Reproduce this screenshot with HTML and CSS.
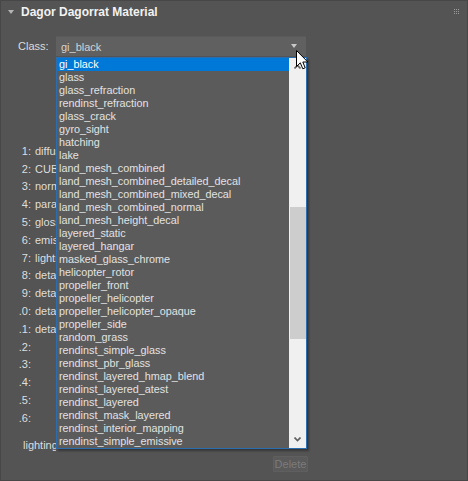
FILE: index.html
```html
<!DOCTYPE html>
<html>
<head>
<meta charset="utf-8">
<link rel="stylesheet" href="styles.css">
</head>
<body>
<div class="panel">
  <div class="header">
    <span class="tri"></span>
    <span class="title">Dagor Dagorrat Material</span>
    <span class="grip">
      <i></i><i></i><i></i><i></i><i></i><i></i><i></i><i></i><i></i>
    </span>
  </div>

  <div class="class-row">
    <span class="class-label">Class:</span>
    <div class="combo">
      <span class="combo-text">gi_black</span>
      <svg class="combo-arrow" width="6" height="4" viewBox="0 0 6 4"><path d="M0 0H6L3 4Z" fill="#c8c8c8"/></svg>
    </div>
  </div>

  <div class="slots">
    <div class="slot"><span class="num">1:</span><span class="name">diffuse</span></div>
    <div class="slot"><span class="num">2:</span><span class="name">CUBIC</span></div>
    <div class="slot"><span class="num">3:</span><span class="name">normal</span></div>
    <div class="slot"><span class="num">4:</span><span class="name">parallax</span></div>
    <div class="slot"><span class="num">5:</span><span class="name">gloss</span></div>
    <div class="slot"><span class="num">6:</span><span class="name">emissive</span></div>
    <div class="slot"><span class="num">7:</span><span class="name">lightmap</span></div>
    <div class="slot"><span class="num">8:</span><span class="name">detail</span></div>
    <div class="slot"><span class="num">9:</span><span class="name">detail</span></div>
    <div class="slot"><span class="num">.0:</span><span class="name">detail</span></div>
    <div class="slot"><span class="num">.1:</span><span class="name">detail</span></div>
    <div class="slot"><span class="num">.2:</span><span class="name"></span></div>
    <div class="slot"><span class="num">.3:</span><span class="name"></span></div>
    <div class="slot"><span class="num">.4:</span><span class="name"></span></div>
    <div class="slot"><span class="num">.5:</span><span class="name"></span></div>
    <div class="slot"><span class="num">.6:</span><span class="name"></span></div>
  </div>

  <div class="lighting-row"><span class="lighting">lighting</span></div>

  <div class="actions">
    <button class="btn-delete" disabled>Delete</button>
  </div>

  <div class="dropdown">
    <div class="items">
      <div class="item selected">gi_black</div>
      <div class="item">glass</div>
      <div class="item">glass_refraction</div>
      <div class="item">rendinst_refraction</div>
      <div class="item">glass_crack</div>
      <div class="item">gyro_sight</div>
      <div class="item">hatching</div>
      <div class="item">lake</div>
      <div class="item">land_mesh_combined</div>
      <div class="item">land_mesh_combined_detailed_decal</div>
      <div class="item">land_mesh_combined_mixed_decal</div>
      <div class="item">land_mesh_combined_normal</div>
      <div class="item">land_mesh_height_decal</div>
      <div class="item">layered_static</div>
      <div class="item">layered_hangar</div>
      <div class="item">masked_glass_chrome</div>
      <div class="item">helicopter_rotor</div>
      <div class="item">propeller_front</div>
      <div class="item">propeller_helicopter</div>
      <div class="item">propeller_helicopter_opaque</div>
      <div class="item">propeller_side</div>
      <div class="item">random_grass</div>
      <div class="item">rendinst_simple_glass</div>
      <div class="item">rendinst_pbr_glass</div>
      <div class="item">rendinst_layered_hmap_blend</div>
      <div class="item">rendinst_layered_atest</div>
      <div class="item">rendinst_layered</div>
      <div class="item">rendinst_mask_layered</div>
      <div class="item">rendinst_interior_mapping</div>
      <div class="item">rendinst_simple_emissive</div>
    </div>
    <div class="scrollbar">
      <div class="sb-btn"><svg width="7" height="5" viewBox="0 0 7 5"><path d="M0.5 4.5L3.5 1.5L6.5 4.5" fill="none" stroke="#606060" stroke-width="1.6"/></svg></div>
      <div class="sb-gap-top"></div>
      <div class="sb-thumb"></div>
      <div class="sb-gap"></div>
      <div class="sb-btn"><svg width="7" height="5" viewBox="0 0 7 5"><path d="M0.5 0.5L3.5 3.5L6.5 0.5" fill="none" stroke="#606060" stroke-width="1.6"/></svg></div>
    </div>
  </div>

  <svg class="cursor" width="13" height="21" viewBox="0 0 13 21">
    <path d="M0.5 0.5V16.5L4.3 12.8L6.8 18.8L9.2 17.8L6.8 12H11.8Z" fill="#ffffff" stroke="#000000" stroke-width="1" stroke-linejoin="round"/>
  </svg>
</div>
</body>
</html>
```

FILE: styles.css
```css
html, body {
  margin: 0;
  padding: 0;
  background: #545454;
}

.panel {
  position: relative;
  width: 466px;
  height: 479px;
  border: 1px solid #474747;
  background: #545454;
  font-family: "Liberation Sans", Arial, sans-serif;
  font-size: 11px;
  color: #dedede;
  overflow: hidden;
}

.header {
  display: flex;
  align-items: center;
  height: 22px;
  padding-left: 7px;
}

.tri {
  width: 0;
  height: 0;
  border-left: 3px solid transparent;
  border-right: 3px solid transparent;
  border-top: 4px solid #b4b4b4;
  margin-right: 7px;
  margin-top: -1px;
}

.title {
  font-weight: bold;
  font-size: 12px;
  color: #f2f2f2;
  flex: 1;
}

.grip {
  display: grid;
  grid-template-columns: repeat(3, 1px);
  grid-auto-rows: 1px;
  gap: 1px;
  margin-right: 8px;
  margin-top: -2px;
}

.grip i {
  display: block;
  width: 1px;
  height: 1px;
  background: #9a9a9a;
}

.class-row {
  display: flex;
  align-items: center;
  margin-top: 13px;
  padding-left: 17px;
  height: 20px;
}

.class-label {
  width: 38px;
  color: #dcdcdc;
}

.combo {
  position: relative;
  width: 250px;
  height: 20px;
  background: #606060;
  box-sizing: border-box;
  border-top: 1px solid #5a5a5a;
  display: flex;
  align-items: center;
  padding-left: 5px;
}

.combo-text {
  flex: 1;
  color: #d2d2d2;
}

.combo-arrow {
  margin-right: 9px;
  margin-top: -2px;
}

.slots {
  margin-top: 86px;
}

.slot {
  display: flex;
  height: 17.8px;
  align-items: center;
  white-space: nowrap;
}

.num {
  width: 30px;
  text-align: right;
}

.name {
  margin-left: 4px;
  max-width: 21px;
  overflow: hidden;
}

.lighting-row {
  margin-top: 11px;
  padding-left: 22px;
  height: 14px;
  line-height: 14px;
  display: flex;
}

.lighting {
  max-width: 33px;
  overflow: hidden;
  white-space: nowrap;
}

.actions {
  display: flex;
  justify-content: flex-end;
  padding-right: 159px;
  margin-top: 4px;
}

.btn-delete {
  font-family: "Liberation Sans", Arial, sans-serif;
  font-size: 11px;
  color: #7a7a7a;
  background: #5a5a5a;
  border: 1px solid #5f5f5f;
  border-radius: 1px;
  height: 16px;
  width: 35px;
  padding: 0;
  line-height: 14px;
}

.dropdown {
  position: absolute;
  left: 55px;
  top: 56px;
  width: 249px;
  height: 390px;
  border: 1px solid #2c6db0;
  background: #5b5b5b;
  display: flex;
  box-shadow: 2px 2px 2px rgba(0, 0, 0, 0.35);
}

.items {
  flex: 1;
  overflow: hidden;
}

.item {
  height: 13px;
  line-height: 13px;
  padding-left: 2px;
  white-space: nowrap;
  color: #e2e2e2;
  font-size: 10.8px;
}

.item.selected {
  background: #0078d7;
  color: #ffffff;
}

.scrollbar {
  width: 17px;
  background: #f0f0f0;
  display: flex;
  flex-direction: column;
}

.sb-btn {
  height: 17px;
  display: flex;
  align-items: center;
  justify-content: center;
}

.sb-gap-top {
  height: 132px;
}

.sb-thumb {
  height: 132px;
  margin-left: 1px;
  background: #cdcdcd;
}

.sb-gap {
  flex: 1;
}

.cursor {
  position: absolute;
  left: 295px;
  top: 49px;
}
```
